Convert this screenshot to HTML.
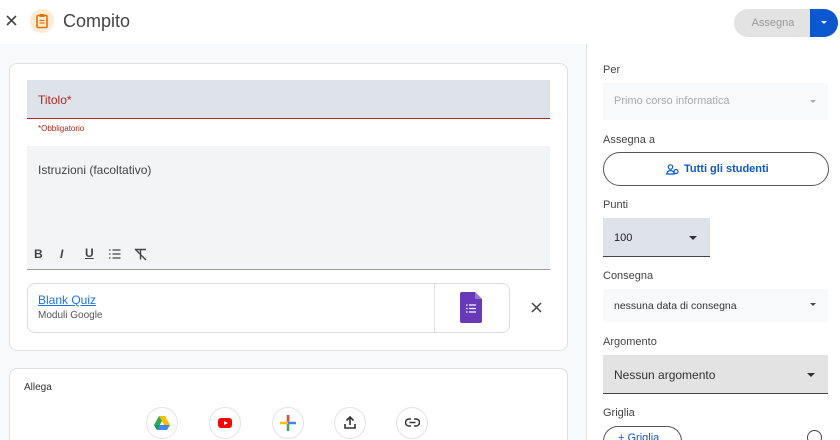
<!DOCTYPE html><html><head><style>
*{margin:0;padding:0;box-sizing:border-box}
html{width:840px;height:440px;overflow:hidden}
body{width:840px;height:440px;overflow:hidden;font-family:"Liberation Sans",sans-serif;background:#fff;position:relative;color:#1f1f1f}
.a{position:absolute}
.lbl{font-size:11px;color:#444}
</style></head><body>
<div class="a" style="left:0;top:44px;width:587px;height:396px;background:#f8f9fa;border-right:1px solid #e3e3e3"></div>
<svg class="a" style="left:6px;top:15px" width="11" height="11"><path d="M1 1l9 9M10 1l-9 9" stroke="#444" stroke-width="1.6"/></svg>
<div class="a" style="left:30px;top:9px;width:24px;height:24px;border-radius:50%;background:#fdebd6"></div>
<svg class="a" style="left:35px;top:13px" width="14" height="16" viewBox="0 0 14 16"><rect x="2" y="2.5" width="10" height="12" rx="1" fill="none" stroke="#e37400" stroke-width="1.6"/><rect x="4.5" y="1" width="5" height="3" fill="#e37400"/><path d="M4.5 7.5h5M4.5 10h5" stroke="#e37400" stroke-width="1.3"/></svg>
<div class="a" style="left:63px;top:11px;font-size:18px;color:#444">Compito</div>
<div class="a" style="left:734px;top:9px;width:78px;height:28px;border-radius:14px 0 0 14px;background:#e3e3e3;color:#9a9a9a;font-size:11px;line-height:28px;text-align:center">Assegna</div>
<div class="a" style="left:810px;top:9px;width:28px;height:28px;border-radius:0 14px 14px 0;background:#0b57d0"></div>
<div class="a" style="left:821px;top:21px;border:3px solid transparent;border-top:3px solid #fff"></div>

<div class="a" style="left:9px;top:63px;width:559px;height:288px;background:#fff;border:1px solid #e0e0e0;border-radius:8px"></div>
<div class="a" style="left:27px;top:80px;width:523px;height:39px;background:#dee3ea;border-bottom:1px solid #b3261e"></div>
<div class="a" style="left:38px;top:93px;font-size:12px;color:#b3261e">Titolo*</div>
<div class="a" style="left:38px;top:124px;font-size:8px;color:#b3261e">*Obbligatorio</div>
<div class="a" style="left:27px;top:146px;width:523px;height:124px;background:#f3f4f6;border-bottom:1px solid #9a9a9a"></div>
<div class="a" style="left:38px;top:163px;font-size:12px;color:#444">Istruzioni (facoltativo)</div>
<div class="a" style="left:34px;top:247px;font-size:12px;color:#444;font-weight:bold">B</div>
<div class="a" style="left:60px;top:247px;font-size:12px;color:#444;font-style:italic;font-weight:bold">I</div>
<div class="a" style="left:85px;top:246px;font-size:12px;color:#444;text-decoration:underline;font-weight:bold">U</div>
<svg class="a" style="left:108px;top:248px" width="14" height="12"><path d="M1 2h1.5M1 6h1.5M1 10h1.5M4.5 2h8M4.5 6h8M4.5 10h8" stroke="#444" stroke-width="1.3"/></svg>
<svg class="a" style="left:134px;top:248px" width="14" height="13"><path d="M1 1.5h11M6.5 1.5v10M1 1l11 11" stroke="#444" stroke-width="1.4"/></svg>
<div class="a" style="left:27px;top:283px;width:483px;height:50px;border:1px solid #dadce0;border-radius:8px"></div>
<div class="a" style="left:434px;top:284px;width:1px;height:48px;background:#e3e3e3"></div>
<div class="a" style="left:38px;top:293px;font-size:12px;color:#1a73e8;text-decoration:underline">Blank Quiz</div>
<div class="a" style="left:38px;top:310px;font-size:10px;color:#555">Moduli Google</div>
<svg class="a" style="left:460px;top:292px" width="22" height="31"><path d="M2 0h13l7 7v22a2 2 0 0 1-2 2H2a2 2 0 0 1-2-2V2a2 2 0 0 1 2-2z" fill="#673ab7"/><path d="M15 0v7h7z" fill="#9575cd"/><path d="M6 13h1.5M6 16.5h1.5M6 20h1.5M9 13h7M9 16.5h7M9 20h7" stroke="#fff" stroke-width="1.3"/></svg>
<svg class="a" style="left:531px;top:302px" width="11" height="11"><path d="M1 1l9 9M10 1l-9 9" stroke="#444" stroke-width="1.5"/></svg>

<div class="a" style="left:9px;top:368px;width:559px;height:90px;background:#fff;border:1px solid #e0e0e0;border-radius:8px"></div>
<div class="a" style="left:24px;top:382px;font-size:10px;color:#333">Allega</div>
<div class="a" style="left:146px;top:407px;width:32px;height:32px;border-radius:50%;border:1px solid #e3e3e3"></div>
<svg class="a" style="left:154px;top:416px" width="16" height="14"><path d="M5 0h6l5 9h-6z" fill="#fbbc04"/><path d="M5 0L0 9l3 5 5-9z" fill="#34a853"/><path d="M3 14h10l3-5H6z" fill="#4285f4"/><path d="M0 9l3 5 3-5z" fill="#0f9d58"/></svg>
<div class="a" style="left:209px;top:407px;width:32px;height:32px;border-radius:50%;border:1px solid #e3e3e3"></div>
<div class="a" style="left:218px;top:418px;width:14px;height:10px;border-radius:3px;background:#f00"></div>
<div class="a" style="left:224px;top:421px;border:2.5px solid transparent;border-left:4px solid #fff"></div>
<div class="a" style="left:272px;top:407px;width:32px;height:32px;border-radius:50%;border:1px solid #e3e3e3"></div>
<svg class="a" style="left:279px;top:414px" width="18" height="18"><path d="M9 1v8" stroke="#ea4335" stroke-width="2.5"/><path d="M9 9v8" stroke="#34a853" stroke-width="2.5"/><path d="M1 9h8" stroke="#fbbc04" stroke-width="2.5"/><path d="M9 9h8" stroke="#4285f4" stroke-width="2.5"/></svg>
<div class="a" style="left:334px;top:407px;width:32px;height:32px;border-radius:50%;border:1px solid #e3e3e3"></div>
<svg class="a" style="left:344px;top:416px" width="12" height="13"><path d="M6 9V1M2.5 4.5L6 1l3.5 3.5M1 8v4h10V8" fill="none" stroke="#333" stroke-width="1.6"/></svg>
<div class="a" style="left:396px;top:407px;width:32px;height:32px;border-radius:50%;border:1px solid #e3e3e3"></div>
<svg class="a" style="left:405px;top:418px" width="15" height="9"><path d="M6 1H4a3.5 3.5 0 0 0 0 7h2M9 1h2a3.5 3.5 0 0 1 0 7H9M4.5 4.5h6" fill="none" stroke="#333" stroke-width="1.5"/></svg>

<div class="a lbl" style="left:603px;top:64px">Per</div>
<div class="a" style="left:603px;top:83px;width:225px;height:37px;background:#f8f9fa"></div>
<div class="a" style="left:614px;top:95px;font-size:11px;color:#aaa">Primo corso informatica</div>
<div class="a" style="left:810px;top:100px;border:3.5px solid transparent;border-top:3.5px solid #aaa"></div>
<div class="a lbl" style="left:603px;top:134px">Assegna a</div>
<div class="a" style="left:603px;top:152px;width:226px;height:34px;border:1px solid #555;border-radius:17px"></div>
<svg class="a" style="left:666px;top:164px" width="13" height="11"><circle cx="4.5" cy="3" r="2.2" fill="none" stroke="#0b57d0" stroke-width="1.2"/><path d="M0.8 10c0-2.2 1.6-3.4 3.7-3.4S8.2 7.8 8.2 10z" fill="none" stroke="#0b57d0" stroke-width="1.2"/><circle cx="10" cy="7.5" r="2" fill="none" stroke="#0b57d0" stroke-width="1.2"/></svg>
<div class="a" style="left:684px;top:163px;font-size:11px;color:#0b57d0;font-weight:bold">Tutti gli studenti</div>
<div class="a lbl" style="left:603px;top:199px">Punti</div>
<div class="a" style="left:603px;top:218px;width:107px;height:39px;background:#dee3ea;border-bottom:1px solid #444"></div>
<div class="a" style="left:614px;top:232px;font-size:11px;color:#222">100</div>
<div class="a" style="left:689px;top:236px;border:4px solid transparent;border-top:4px solid #333"></div>
<div class="a lbl" style="left:603px;top:270px">Consegna</div>
<div class="a" style="left:603px;top:289px;width:225px;height:33px;background:#f8f9fa"></div>
<div class="a" style="left:614px;top:300px;font-size:10.5px;color:#333">nessuna data di consegna</div>
<div class="a" style="left:810px;top:303px;border:3.5px solid transparent;border-top:3.5px solid #444"></div>
<div class="a lbl" style="left:603px;top:336px">Argomento</div>
<div class="a" style="left:603px;top:355px;width:225px;height:39px;background:#e3e3e3;border-bottom:1px solid #444"></div>
<div class="a" style="left:614px;top:368px;font-size:12px;color:#333">Nessun argomento</div>
<div class="a" style="left:807px;top:373px;border:4px solid transparent;border-top:4px solid #333"></div>
<div class="a lbl" style="left:603px;top:407px">Griglia</div>
<div class="a" style="left:603px;top:426px;width:79px;height:30px;border:1px solid #555;border-radius:15px"></div>
<div class="a" style="left:618px;top:432px;font-size:11px;color:#0b57d0">+ Griglia</div>
<div class="a" style="left:807px;top:430px;width:15px;height:15px;border-radius:50%;border:1.5px solid #444"></div>
</body></html>
